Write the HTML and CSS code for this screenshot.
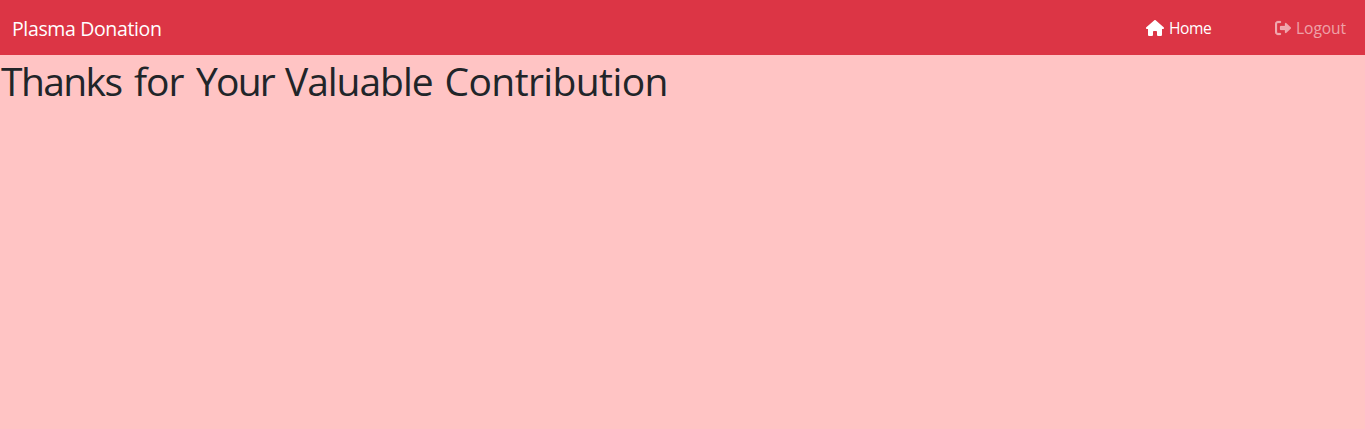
FILE: index.html
```html
<!DOCTYPE html>
<html lang="en">
<head>
<meta charset="utf-8">
<title>Plasma Donation</title>
<link rel="stylesheet" href="styles.css">
</head>
<body>
<nav class="navbar">
  <a class="brand">Plasma Donation</a>
  <div class="links">
    <a class="link active"><svg class="icon home" viewBox="0 0 576 512"><path d="M575.8 255.5c0 18-15 32.100-32 32.100h-32l.7 160.200c0 2.700-.2 5.400-.5 8.100V472c0 22.100-17.900 40-40 40H392c-22.100 0-40-17.900-40-40V376c0-13.300-10.700-24-24-24h-80c-13.300 0-24 10.700-24 24v96c0 22.100-17.900 40-40 40H104c-22.100 0-40-17.900-40-40V287.600H32c-18 0-32-14-32-32.100 0-9 3-17 10-24L266.400 8c7-7 15-8 22-8s15 2 21 7L564.800 231.500c8 7 12 15 11 24z"/></svg><span class="label home-label">Home</span></a>
    <a class="link"><svg class="icon logout" viewBox="0 0 512 512"><path d="M160 96c17.700 0 32-14.300 32-32s-14.300-32-32-32H96C43 32 0 75 0 128v256c0 53 43 96 96 96h64c17.700 0 32-14.300 32-32s-14.300-32-32-32H96c-17.700 0-32-14.300-32-32V128c0-17.700 14.300-32 32-32zM504.500 273.400c4.800-4.500 7.500-10.800 7.500-17.400s-2.700-12.900-7.500-17.400l-144-136c-7-6.600-17.200-8.400-26-4.600S320 110.400 320 120v72H192c-17.700 0-32 14.300-32 32v64c0 17.700 14.300 32 32 32h128v72c0 9.600 5.700 18.200 14.500 22s19 2 26-4.600z"/></svg><span class="label logout-label">Logout</span></a>
  </div>
</nav>
<h1 class="title"><span class="thanks">Thanks </span><span class="for">for </span><span class="your">Your </span><span class="valuable">Valuable </span><span class="contribution">Contribution</span></h1>
</body>
</html>
```
FILE: styles.css
```css
body { margin: 0; background: #ffc4c4; color: #212529; font-family: "Open Sans", "Noto Sans", sans-serif; }
.navbar { display: flex; justify-content: space-between; align-items: center; height: 55px; padding: 0 19px 0 12px; box-sizing: border-box; background: #dc3545; }
.brand { color: #fff; font-size: 19.5px; letter-spacing: -.36px; line-height: 30px; padding-top: 3px; white-space: nowrap; }
.links { display: flex; gap: 64px; padding-top: 1px; }
.link { display: flex; align-items: center; gap: 5px; color: rgba(255,255,255,.55); font-size: 15.6px; line-height: 24px; white-space: nowrap; }
.active { color: #fff; }
.icon { height: 16px; fill: currentColor; }
.home { width: 18px; }
.logout { width: 16px; stroke: currentColor; stroke-width: 8px; }
.label { width: 50px; letter-spacing: -.07px; }
.home-label { width: 42px; letter-spacing: -.4px; }
.title { display: flex; margin: 0; font-size: 39px; letter-spacing: -1.05px; font-weight: 400; line-height: 48px; padding: 2px 0 0 1px; white-space: nowrap; }
.thanks { width: 133px; letter-spacing: -1.6px; }
.for { width: 62px; }
.your { width: 89px; letter-spacing: -1.8px; }
.valuable { width: 159.5px; }
.contribution { letter-spacing: -.6px; }
```
